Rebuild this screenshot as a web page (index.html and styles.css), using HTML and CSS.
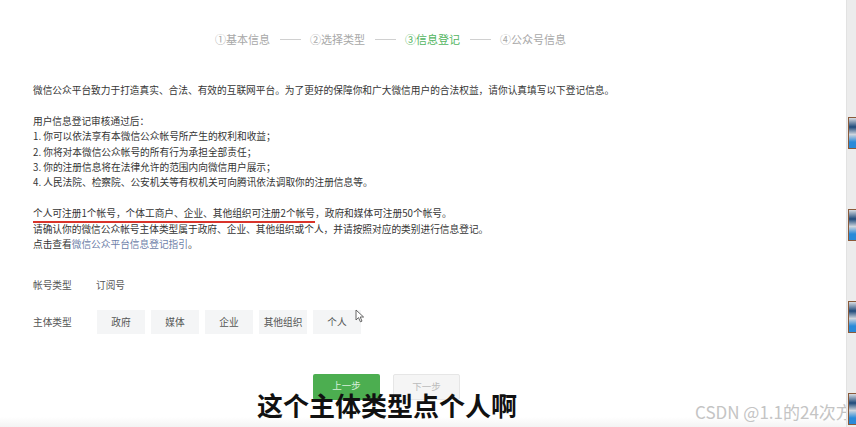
FILE: index.html
```html
<!DOCTYPE html>
<html lang="zh-CN">
<head>
    <meta charset="UTF-8">
    <title>信息登记</title>
    <link rel="stylesheet" href="styles.css">
</head>
<body>

<div class="screen">
    <div class="page">
        <div class="steps">
            <span class="step">①基本信息</span>
            <span class="step-line"></span>
            <span class="step">②选择类型</span>
            <span class="step-line"></span>
            <span class="step active">③信息登记</span>
            <span class="step-line"></span>
            <span class="step">④公众号信息</span>
        </div>

        <div class="notice">
            <p>微信公众平台致力于打造真实、合法、有效的互联网平台。为了更好的保障你和广大微信用户的合法权益，请你认真填写以下登记信息。</p>
            <p>用户信息登记审核通过后：<br>
               1. 你可以依法享有本微信公众帐号所产生的权利和收益；<br>
               2. 你将对本微信公众帐号的所有行为承担全部责任；<br>
               3. 你的注册信息将在法律允许的范围内向微信用户展示；<br>
               4. 人民法院、检察院、公安机关等有权机关可向腾讯依法调取你的注册信息等。</p>
            <p><span class="marked">个人可注册1个帐号，个体工商户、企业、其他组织可注册2个帐号</span>，政府和媒体可注册50个帐号。<br>
               请确认你的微信公众帐号主体类型属于政府、企业、其他组织或个人，并请按照对应的类别进行信息登记。<br>
               点击查看<a class="link" href="#">微信公众平台信息登记指引</a>。</p>
        </div>

        <div class="form-row account">
            <span class="label">帐号类型</span>
            <span class="value">订阅号</span>
        </div>
        <div class="form-row types">
            <span class="label">主体类型</span>
            <div class="type-list">
                <span class="type-btn">政府</span>
                <span class="type-btn">媒体</span>
                <span class="type-btn">企业</span>
                <span class="type-btn">其他组织</span>
                <span class="type-btn">个人</span>
            </div>
            <svg class="cursor" width="10" height="14" viewBox="0 0 10 14">
                <path d="M1 1 L1 11 L3.5 8.6 L5.4 12.8 L7 12.1 L5.2 8 L8.6 8 Z" fill="#fff" stroke="#555" stroke-width="0.9" stroke-linejoin="round"/>
            </svg>
        </div>

        <div class="actions">
            <span class="btn btn-green">上一步</span>
            <span class="btn btn-grey">下一步</span>
        </div>

        <div class="subtitle">这个主体类型点个人啊</div>
        <div class="watermark">CSDN @1.1的24次方</div>
    </div>

    <div class="strip">
        <span class="glass"></span>
        <span class="glass"></span>
        <span class="glass"></span>
        <span class="glass"></span>
    </div>
</div>

</body>
</html>
```

FILE: styles.css
```css
body {
    margin: 0;
    font-family: "Noto Sans CJK SC", "Noto Sans", sans-serif;
    color: #353535;
    background: #fff;
}

.screen {
    display: flex;
    width: 856px;
    height: 427px;
    overflow: hidden;
}

.page {
    position: relative;
    flex: 1;
    padding: 32px 0 0 33px;
    background: linear-gradient(to bottom, #fff 0, #fff 417px, #f3f3f3 427px);
}

.steps {
    display: flex;
    align-items: center;
    height: 14px;
    padding-left: 182px;
    font-size: 11px;
    color: #a8a8a8;
}

.step-line {
    width: 21px;
    height: 1px;
    margin: 0 9px 0 10px;
    background: #d0d0d0;
}

.step.active {
    color: #52b560;
}

.notice {
    margin-top: 37px;
    font-size: 9.7px;
    line-height: 15.4px;
}

.notice p {
    margin: 0 0 15.4px;
}

.marked {
    text-decoration: underline;
    text-decoration-color: #d9342b;
    text-decoration-thickness: 2px;
    text-underline-offset: 4px;
}

.link {
    color: #6c7ea8;
    text-decoration: none;
}

.form-row {
    display: flex;
    align-items: center;
    font-size: 9.7px;
    color: #555;
}

.account {
    margin-top: 26px;
}

.label {
    width: 63px;
}

.types {
    position: relative;
    margin-top: 18px;
}

.type-list {
    display: flex;
    gap: 6px;
    margin-left: 1px;
}

.type-btn {
    width: 48px;
    height: 24px;
    line-height: 24px;
    text-align: center;
    background: #f4f5f6;
    color: #555;
}

.cursor {
    position: absolute;
    left: 322px;
    top: -1px;
}

.actions {
    display: flex;
    gap: 13px;
    margin-top: 40px;
    padding-left: 280px;
}

.btn {
    width: 67px;
    height: 26px;
    line-height: 22px;
    text-align: center;
    font-size: 9.5px;
    border-radius: 2px;
}

.btn-green {
    background: #4cae50;
    color: #d9f0da;
}

.btn-grey {
    background: #f5f5f5;
    border: 1px solid #e6e6e6;
    color: #bbb;
    box-sizing: border-box;
}

.subtitle {
    position: absolute;
    left: 257px;
    top: 389px;
    font-size: 26px;
    font-weight: bold;
    line-height: 32px;
    color: #111;
}

.watermark {
    position: absolute;
    left: 695px;
    top: 401px;
    font-size: 17px;
    line-height: 22px;
    color: #c4c4c4;
    white-space: nowrap;
}

.strip {
    position: relative;
    z-index: 1;
    width: 10px;
    background: #ececec;
    border-left: 1px solid #e2e2e2;
    display: flex;
    flex-direction: column;
    gap: 60px;
    padding-top: 117px;
    box-sizing: border-box;
}

.glass {
    display: block;
    flex: none;
    width: 9px;
    height: 32px;
    margin-left: 1px;
    box-sizing: border-box;
    border: 1.5px solid #8a5a3a;
    background: linear-gradient(to bottom, #d8dde2 0, #1f4a7a 30%, #cdd6de 55%, #2a8ad8 80%, #2a8ad8 100%);
}
```
